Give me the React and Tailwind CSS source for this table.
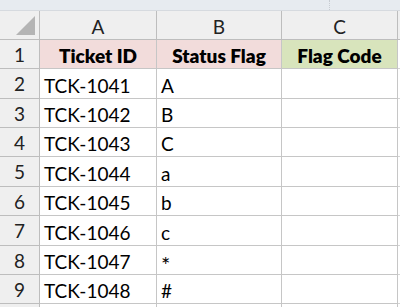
const rows = [
  ['TCK-1041', 'A'],
  ['TCK-1042', 'B'],
  ['TCK-1043', 'C'],
  ['TCK-1044', 'a'],
  ['TCK-1045', 'b'],
  ['TCK-1046', 'c'],
  ['TCK-1047', '*'],
  ['TCK-1048', '#'],
];

// integer row heights so the grid lines land on whole pixels
const heights = ['h-[30px]', 'h-[29px]', 'h-[29px]', 'h-[30px]', 'h-[29px]', 'h-[30px]', 'h-[29px]', 'h-[29px]'];

const cols = 'grid grid-cols-[40px_117px_125px_116px_1fr]';

function Row({ num, height, children }) {
  return (
    <div className={`${cols} ${height}`}>
      <div className="flex items-center justify-center bg-[#efefef] border-r border-b border-[#bdbdbd] text-[#222]">
        {num}
      </div>
      {children}
      <div className="border-b border-[#d4d4d4]" />
    </div>
  );
}

export default function App() {
  return (
    <div
      className="w-[400px] h-[307px] overflow-hidden bg-white text-[19px] text-black leading-none"
      style={{ fontFamily: 'Lato, "Open Sans", sans-serif' }}
    >
      {/* bottom edge of the formula bar */}
      <div className="flex h-[11px] bg-[#e7ebf0] border-b border-[#d6dadf]">
        <div className="w-[330px] border-r border-dotted border-[#c8ccd2]" />
      </div>

      {/* column letters */}
      <div className={`${cols} h-[29px] bg-[#efefef] text-[#222]`}>
        <div className="relative border-r border-b border-[#bdbdbd]">
          <div className="absolute left-[16px] top-[5px] w-0 h-0 border-l-[19px] border-l-transparent border-b-[19px] border-b-[#b4b4b4]" />
        </div>
        <div className="flex items-center justify-center border-r border-b border-[#bdbdbd] pt-[2px]">A</div>
        <div className="flex items-center justify-center border-r border-b border-[#bdbdbd] pt-[2px]">B</div>
        <div className="flex items-center justify-center border-r border-b border-[#bdbdbd] pt-[2px]">C</div>
        <div className="border-b border-[#bdbdbd]" />
      </div>

      <Row num="1" height="h-[29px]">
        <div className="flex items-center justify-center bg-[#f2dcdb] border-r border-b border-[#c6c6c6] font-extrabold pt-[2px]">Ticket ID</div>
        <div className="flex items-center justify-center bg-[#f2dcdb] border-r border-b border-[#c6c6c6] font-extrabold pt-[2px]">Status Flag</div>
        <div className="flex items-center justify-center bg-[#d8e4bc] border-r border-b border-[#c6c6c6] font-extrabold pt-[2px]">Flag Code</div>
      </Row>

      {rows.map(([id, flag], i) => (
        <Row key={id} num={i + 2} height={heights[i]}>
          <div className="flex items-center pl-[4px] pt-[3px] border-r border-b border-[#c6c6c6]">{id}</div>
          <div className="flex items-center pl-[4px] pt-[3px] border-r border-b border-[#c6c6c6]">
            {flag === '*' ? <span className="inline-block text-[22px] translate-y-[3px]">*</span> : flag}
          </div>
          <div className="border-r border-b border-[#c6c6c6]" />
        </Row>
      ))}

      {/* next row, only its top sliver is visible */}
      <Row num="" height="h-[29px]">
        <div className="border-r border-b border-[#c6c6c6]" />
        <div className="border-r border-b border-[#c6c6c6]" />
        <div className="border-r border-b border-[#c6c6c6]" />
      </Row>
    </div>
  );
}
